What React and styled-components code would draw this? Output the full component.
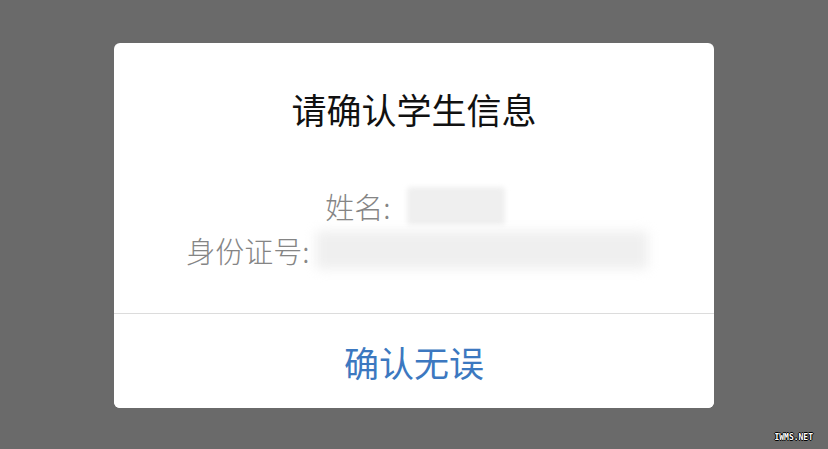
import styled, { createGlobalStyle } from "styled-components";

const Global = createGlobalStyle`
  html, body {
    margin: 0;
    padding: 0;
    background: #6a6a6a;
  }
  body {
    font-family: "Noto Sans CJK SC", "Noto Sans", sans-serif;
  }
`

const Page = styled.div`
  position: relative;
  width: 828px;
  height: 449px;
  display: flex;
  align-items: center;
  justify-content: center;
  background: #6a6a6a;
  overflow: hidden;
`

const Dialog = styled.div`
  width: 600px;
  height: 365px;
  margin-top: 2px;
  background: #fff;
  border-radius: 6px;
  display: flex;
  flex-direction: column;
  overflow: hidden;
`

const Body = styled.div`
  height: 270px;
  display: flex;
  flex-direction: column;
  align-items: center;
  border-bottom: 1px solid #dcdcdc;
`

const Title = styled.h2`
  margin: 46px 0 0;
  font-size: 35px;
  font-weight: 400;
  line-height: 40px;
  color: #111;
`

const Info = styled.div`
  margin-top: 55px;
  display: flex;
  flex-direction: column;
  align-items: center;
`

const Row = styled.div`
  display: flex;
  align-items: center;
  height: 44px;
  font-size: 29px;
  font-weight: 300;
  color: #858585;
  padding-left: ${p => p.$shift || 0}px;
`

const Hidden = styled.span`
  display: inline-block;
  width: ${p => p.$w}px;
  height: 38px;
  margin-left: ${p => p.$gap}px;
  background: #efefef;
  border-radius: 4px;
  filter: blur(${p => p.$blur}px);
`

const Confirm = styled.button`
  flex: 1;
  border: none;
  background: #fff;
  font-family: inherit;
  font-size: 35px;
  font-weight: 400;
  color: #3c78c0;
  padding: 0;
  cursor: pointer;
`

const Mark = styled.div`
  position: absolute;
  right: 15px;
  bottom: 7px;
  font-family: "DejaVu Sans Mono", monospace;
  font-size: 8px;
  font-weight: 700;
  color: #fff;
  text-shadow: 1px 0 0 #000, -1px 0 0 #000, 0 1px 0 #000, 0 -1px 0 #000;
`

export default function App() {
  return (
    <Page>
      <Global />
      <Dialog>
        <Body>
          <Title>请确认学生信息</Title>
          <Info>
            <Row $shift={2}>
              姓名:<Hidden $w={98} $gap={16} $blur={2.5} />
            </Row>
            <Row $shift={6}>
              身份证号:<Hidden $w={332} $gap={6} $blur={6} />
            </Row>
          </Info>
        </Body>
        <Confirm>确认无误</Confirm>
      </Dialog>
      <Mark>IWMS.NET</Mark>
    </Page>
  );
}
